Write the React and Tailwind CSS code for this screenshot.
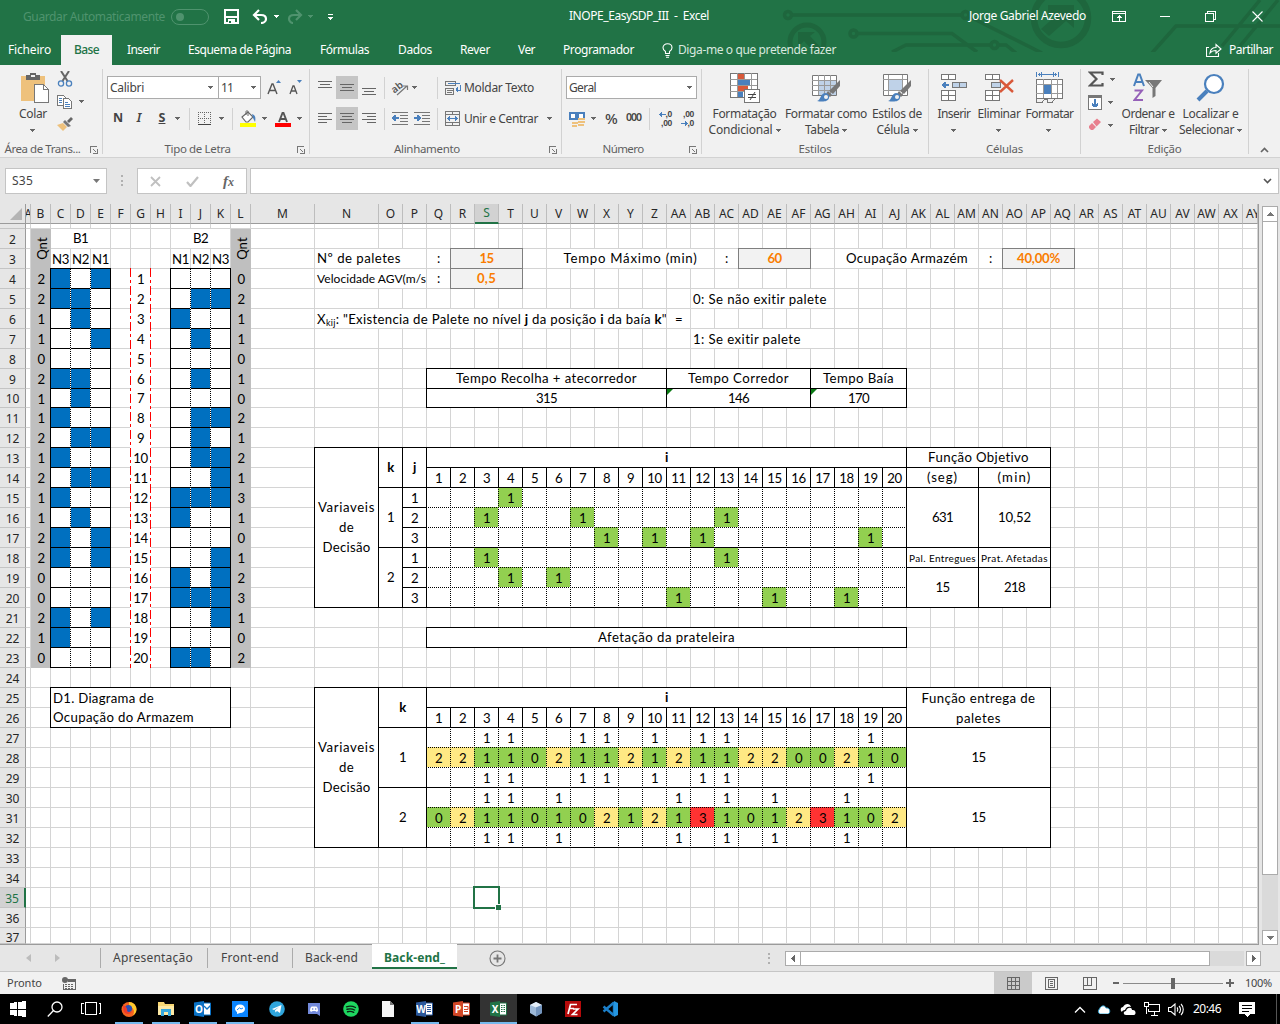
import { useLayoutEffect, useRef } from "react";

/* Text whose tracking is tuned so that it fills an exact width. */
function T({ w, className = "", children }) {
  const ref = useRef(null);
  useLayoutEffect(() => {
    const el = ref.current;
    if (!el || !w) return;
    el.style.letterSpacing = "0px";
    const box = el.getBoundingClientRect();
    const natural = Math.abs(box.width - el.offsetWidth) > 1 ? el.offsetWidth : box.width;
    const n = Math.max(1, el.textContent.length);
    el.style.letterSpacing = `${(w - natural) / n}px`;
  }, [w]);
  return (
    <span ref={ref} className={`inline-block shrink-0 whitespace-pre ${className}`}>
      {children}
    </span>
  );
}

function Caret({ className = "text-[#666]" }) {
  return (
    <svg width="5" height="3" viewBox="0 0 5 3" className={`shrink-0 ${className}`} shapeRendering="crispEdges">
      <path d="M0 0h5v1H0zM1 1h3v1H1zM2 2h1v1H2z" fill="currentColor" />
    </svg>
  );
}

function S({ w = 16, h = 16, children, crisp = true, className = "" }) {
  return (
    <svg
      width={w}
      height={h}
      viewBox={`0 0 ${w} ${h}`}
      fill="none"
      className={`shrink-0 ${className}`}
      shapeRendering={crisp ? "crispEdges" : "auto"}
    >
      {children}
    </svg>
  );
}

const Slot = ({ className, children }) => (
  <div className={`flex shrink-0 items-center justify-center ${className}`}>{children}</div>
);

/* ---------- Title bar ---------- */

function Circuit() {
  return (
    <svg className="absolute left-0 top-0" width="1280" height="52" viewBox="0 0 1280 52" fill="none" stroke="#1e663d" strokeWidth="3.5">
      <circle cx="788" cy="15" r="3.5" />
      <path d="M792 15H962M970 17L1042 53" />
      <circle cx="965.5" cy="15" r="3.5" />
      <circle cx="807" cy="42" r="17" strokeWidth="5" />
      <path d="M798 32h17l-5 4 10 11-6 5-10-11-6 6z" fill="#1e663d" stroke="none" />
      <circle cx="853.5" cy="33.5" r="3.5" />
      <path d="M857 33.500H952L977 52M892 52L906 45H990M998 45h8l10 8" />
      <circle cx="994.500" cy="45" r="3.5" />
      <circle cx="1061" cy="18" r="27" strokeWidth="6.500" />
      <path d="M1048 5h26v23l-8-7-17 15-8-7 18-16h-11z" fill="#1e663d" stroke="none" />
      <path d="M1152 53L1176 26H1280M1222 46L1260 0M1240 46L1278 0" />
    </svg>
  );
}

function TitleBar() {
  return (
    <div className="relative z-10 flex h-[35px] text-[12px] text-white">
      <div className="flex h-[33px] items-center">
        <T w={142} className="ml-[23px] pt-[1px] text-[#4f936e]">Guardar Automaticamente</T>
        <div className="ml-[6px] flex h-[16px] w-[38px] items-center rounded-full border border-[#4f936e] pl-[4px]">
          <div className="size-[8px] rounded-full bg-[#4f936e]" />
        </div>
        <S w={15} h={15} className="ml-[15px]">
          <path d="M1 1h13v13H1z" stroke="white" strokeWidth="2" />
          <path d="M2 7h11v2H2zM4 10h7v4H4z" fill="white" />
          <path d="M5 12h2v2H5z" fill="#217346" />
        </S>
        <S w={17} h={15} crisp={false} className="ml-[13px]">
          <path d="M7 1L2 6l5 5M2 6h7c4 0 5 2 5 4s-2 4-5 4" stroke="white" strokeWidth="2.200" />
        </S>
        <span className="ml-[5px]"><Caret className="text-white" /></span>
        <S w={17} h={15} crisp={false} className="ml-[8px]">
          <path d="M9 1l5 5-5 5M14 6H7C3 6 2 8 2 10s2 4 4 4" stroke="#4f936e" strokeWidth="2.200" />
        </S>
        <span className="ml-[4px]"><Caret className="text-[#4f936e]" /></span>
        <S w={5} h={6} className="ml-[15px]">
          <path d="M0 0h5v1H0zM0 3h5v1H0zM1 4h3v1H1zM2 5h1v1H2z" fill="white" />
        </S>
      </div>
      <div className="flex h-[32px] items-center">
        <T w={140} className="ml-[236px]">INOPE_EasySDP_III  -  Excel</T>
        <T w={117} className="ml-[260px]">Jorge Gabriel Azevedo</T>
        <S w={14} h={11} className="ml-[26px]">
          <path d="M.5.5h13v10H.5zM0 2.500h14" stroke="white" />
          <path d="M7 4h1v6H7zM6 5h3v1H6zM5 6h5v1H5z" fill="white" />
        </S>
        <div className="ml-[34px] h-px w-[10px] bg-white" />
        <S w={11} h={11} className="ml-[35px]">
          <path d="M.5 2.500h8v8h-8zM2.500 2V.5h8v8H9" stroke="white" />
        </S>
        <S w={11} h={11} crisp={false} className="ml-[36px]">
          <path d="M.5.5l10 10M10.500.5l-10 10" stroke="white" strokeWidth="1.100" />
        </S>
      </div>
    </div>
  );
}

function TabRow() {
  return (
    <div className="relative z-10 flex h-[30px] items-center text-[12px] text-white">
      <T w={43} className="ml-[8px]">Ficheiro</T>
      <div className="ml-[10px] flex h-full w-[51px] items-center justify-center bg-[#f1f1f1] font-medium text-[#217346]">
        <T w={25}>Base</T>
      </div>
      <T w={33} className="ml-[15px]">Inserir</T>
      <T w={103} className="ml-[28px]">Esquema de Página</T>
      <T w={49} className="ml-[29px]">Fórmulas</T>
      <T w={34} className="ml-[29px]">Dados</T>
      <T w={30} className="ml-[28px]">Rever</T>
      <T w={17} className="ml-[28px]">Ver</T>
      <T w={71} className="ml-[28px]">Programador</T>
      <S w={11} h={15} crisp={false} className="ml-[28px]">
        <path d="M3.500 10.500v-2C2 7.500 1 6.500 1 4.800 1 2.300 3 .8 5.500.8S10 2.300 10 4.800c0 1.700-1 2.700-2.500 3.700v2zM3.500 12.500h4M4 14.300h3" stroke="white" strokeWidth="1.100" />
      </S>
      <T w={158} className="ml-[5px] text-[#d8e8df]">Diga-me o que pretende fazer</T>
      <S w={16} h={14} crisp={false} className="ml-[370px]">
        <path d="M3 4.500H.5v9h12V10M4 10c.5-4 3-5.500 6-5.500V1.500L15 6l-5 4.200V7.500c-2.500 0-4.500.5-6 2.500z" stroke="white" strokeWidth="1.100" />
      </S>
      <T w={44} className="ml-[7px]">Partilhar</T>
    </div>
  );
}

/* ---------- Ribbon ---------- */

const Launcher = () => (
  <S w={8} h={8}>
    <path d="M.5 7V.5H7" stroke="#777" />
    <path d="M3 3l3 3M7.500 3v4.500H3" stroke="#777" />
  </S>
);

function Group({ className, label, lw, launcher, children }) {
  return (
    <div className={`flex h-[92px] shrink-0 flex-col ${className}`}>
      <div className="flex h-[76px]">{children}</div>
      <div className={`relative flex h-[16px] items-center justify-center text-[11.500px] text-[#5f5f5f] ${launcher ? "pr-[17px]" : ""}`}>
        <T w={lw}>{label}</T>
        {launcher && <div className="absolute right-[4px] top-[5px]"><Launcher /></div>}
      </div>
    </div>
  );
}

const Divider = () => <div className="mt-[4px] h-[85px] w-px shrink-0 bg-[#d2d2d2]" />;
const Sep = ({ className = "" }) => <div className={`h-[22px] w-px shrink-0 bg-[#d2d2d2] ${className}`} />;

function Lines({ kind }) {
  const d = {
    top: "M0 1.500h14M2 4.500h10M0 7.500h14",
    mid: "M0 4.500h14M2 7.500h10M0 10.500h14",
    bot: "M0 8.500h14M2 11.500h10M0 14.500h14",
    left: "M0 2.500h14M0 5.500h9M0 8.500h14M0 11.500h9",
    center: "M0 2.500h14M2 5.500h10M0 8.500h14M2 11.500h10",
    right: "M0 2.500h14M5 5.500h9M0 8.500h14M5 11.500h9",
  }[kind];
  return <S w={14} h={15}><path d={d} stroke="#666" /></S>;
}

function Big({ className, icon, a, aw, b, bw, caretOnly }) {
  return (
    <div className={`flex shrink-0 flex-col items-center text-[12px] leading-[16px] text-[#444] ${className}`}>
      <div className="mt-[6px] flex h-[34px] items-center justify-center">{icon}</div>
      <div className="mt-[1px] flex h-[16px] items-center"><T w={aw}>{a}</T></div>
      <div className="flex h-[16px] items-center gap-[3px]">
        {!caretOnly && <T w={bw}>{b}</T>}
        <span className={caretOnly ? "-translate-x-px" : ""}><Caret /></span>
      </div>
    </div>
  );
}

const brush = (
  <g>
    <path d="M30 7v6l-7 8-4-3z" fill="#777" />
    <path d="M18 18l4 4-2 2-4-3z" fill="#777" />
    <path d="M15 20c3 0 5 3 4 5-1 4-7 4-12 3 4-1 3-7 8-8z" fill="#4a80bd" />
    <circle cx="16" cy="24" r="2" fill="#f1f1f1" />
  </g>
);

const IcPaste = (
  <S w={30} h={32} className="translate-x-[2px]">
    <path d="M1 4h24v25H1z" fill="#eec17c" />
    <path d="M6 3h4V1h6v2h4v5H6z" fill="#666" />
    <path d="M11 3h4v2h-4z" fill="#f1f1f1" />
    <path d="M14.500 12.500h9l5 5v13h-14z" fill="white" stroke="#777" />
    <path d="M23.500 12.500v5h5" stroke="#777" />
  </S>
);
const IcCond = (
  <S w={30} h={32}>
    <path d="M.5 1.500h27v24H.5z" fill="white" stroke="#777" />
    <path d="M7.500 1v24M14.500 1v24M21.500 1v24M0 7.500h27M0 13.500h27M0 19.500h27" stroke="#999" />
    <path d="M8 2h6v5H8zM8 14h10v5H8z" fill="#d9593a" />
    <path d="M8 8h12v5H8zM8 20h5v5H8z" fill="#4a80bd" />
    <path d="M14.500 17.500h15v13h-15z" fill="white" stroke="#777" />
    <path d="M18 22.500h8M18 25.500h8M20 28l5-8" stroke="#444" shapeRendering="auto" />
  </S>
);
const IcTable = (
  <S w={32} h={31} crisp={false}>
    <path d="M2.500 2.500h24v20h-24z" fill="white" stroke="#777" />
    <path d="M9 8h17v14H9z" fill="#bfd2e8" />
    <path d="M8.500 2v20M14.500 2v20M20.500 2v20M2 7.500h24M2 12.500h24M2 17.500h24" stroke="#999" />
    {brush}
  </S>
);
const IcStyle = (
  <S w={32} h={31} crisp={false}>
    <path d="M2.500 1.500h24v21h-24z" fill="white" stroke="#777" />
    <path d="M7.500 2v20M21.500 2v20M2 6.500h24M2 17.500h24" stroke="#999" />
    <path d="M8 7h13v10H8z" fill="#bfd2e8" />
    {brush}
  </S>
);
const IcInsert = (
  <S w={28} h={30}>
    <path d="M1.500 1.500h14v5h-14zM8.500 1v6M1.500 17.500h14v10h-14zM8.500 17v10M1 22.500h14" fill="white" stroke="#777" />
    <path d="M12.500 9.500h14v5h-14z" fill="#bfd2e8" stroke="#777" />
    <path d="M19.500 9v6" stroke="#777" />
    <path d="M2 11h7v2H2zM3 10h3v4H3zM4 9h2v6H4z" fill="#4a80bd" />
  </S>
);
const IcDelete = (
  <S w={31} h={30}>
    <path d="M1.500 1.500h14v5h-14zM8.500 1v6M1.500 17.500h14v10h-14zM8.500 17v10M1 22.500h14" fill="white" stroke="#777" />
    <path d="M7.500 9.500h9v5h-9z" fill="#bfd2e8" stroke="#777" />
    <path d="M16 7l13 12M29 7L16 19" stroke="#d9593a" strokeWidth="2.400" shapeRendering="auto" />
  </S>
);
const IcFormat = (
  <S w={28} h={32}>
    <path d="M.5 0v5M22.500 0v5M2 2.500h19M5.500 0v5M17.500 0v5M3.500 1v3M19.500 1v3" stroke="#4a80bd" />
    <path d="M.5 7.500h26v19H.5z" fill="white" stroke="#777" />
    <path d="M7.500 7v19M15.500 7v19M21.500 7v19M0 12.500h26M0 21.500h26" stroke="#999" />
    <path d="M8 13h7v9H8z" fill="#4a80bd" />
    <path d="M.5 26v4h6l2-3h3v3h5l2-3" stroke="#777" />
  </S>
);
const IcSort = (
  <S w={30} h={30} crisp={false}>
    <path d="M1 13L5.200 1.500h1.600L11 13M2.700 9h6.600" stroke="#4a80bd" strokeWidth="2" />
    <path d="M1.500 17.500H9L1.500 27H10" stroke="#9560b8" strokeWidth="2" />
    <path d="M12 7h17l-6.500 8v8l-3 2V15z" fill="#777" />
    <path d="M16 9l4 5" stroke="#f1f1f1" />
  </S>
);
const IcFind = (
  <S w={30} h={30} crisp={false}>
    <path d="M2 27l9-9" stroke="#4a80bd" strokeWidth="4" />
    <circle cx="18" cy="11" r="9" fill="white" stroke="#4a80bd" strokeWidth="2.200" />
  </S>
);

const Digits = ({ children }) => (
  <span className="font-['Liberation_Sans'] text-[8.500px] font-bold leading-[9px] tracking-[-0.3px]">{children}</span>
);

function Ribbon() {
  return (
    <div className="flex h-[93px] border-b border-[#d2d2d2] bg-[#f1f1f1]">
      <Group className="w-[102px]" label="Área de Trans..." lw={76} launcher>
        <div className="w-[4px]" />
        <Big className="w-[58px]" icon={IcPaste} a="Colar" aw={28} caretOnly />
        <div className="flex flex-col pt-[4px]">
          <Slot className="h-[20px] w-[16px] -translate-x-[5px]">
            <S w={16} h={16} crisp={false}>
              <path d="M4 0l6.500 10M12 0L5.500 10" stroke="#666" strokeWidth="2" />
              <circle cx="4" cy="12.500" r="2.600" stroke="#4a80bd" strokeWidth="1.300" />
              <circle cx="12" cy="12.500" r="2.600" stroke="#4a80bd" strokeWidth="1.300" />
            </S>
          </Slot>
          <div className="-ml-[5px] flex h-[25px] items-center">
            <S>
              <path d="M.5 1.500h6l3 3v7h-9z" fill="white" stroke="#777" />
              <path d="M6.500 4.500h5l3 3v7h-8z" fill="white" stroke="#777" />
              <path d="M2 4.500h3M2 6.500h3M2 8.500h3M8 8.500h3M8 10.500h5M8 12.500h5" stroke="#4a80bd" />
            </S>
            <span className="ml-[6px]"><Caret /></span>
          </div>
          <Slot className="h-[20px] w-[16px] -translate-x-[5px]">
            <S crisp={false}>
              <path d="M0 9l6-2 4 4-4 4z" fill="#eec17c" />
              <path d="M6 6l2-2 6 6-3 1z" fill="#777" />
              <path d="M10 5l4-4 2 2-4 4z" fill="#666" />
            </S>
          </Slot>
        </div>
      </Group>
      <Divider />
      <Group className="w-[206px]" label="Tipo de Letra" lw={66} launcher>
        <div className="flex flex-col pl-[4px] pt-[11px] text-[12px] text-[#444]">
          <div className="flex h-[23px] items-center">
            <div className="flex h-full w-[112px] items-center justify-between border border-[#ababab] bg-white pl-[2px] pr-[5px]"><T w={34}>Calibri</T><Caret /></div>
            <div className="-ml-px flex h-full w-[43px] items-center justify-between border border-[#ababab] bg-white pl-[2px] pr-[4px]"><T w={12}>11</T><Caret /></div>
            <S w={14} h={16} className="ml-[6px]" crisp={false}>
              <path d="M1 14L5 4h1l4 10M2.500 10.500h6" stroke="#555" strokeWidth="1.400" /><path d="M9 3h5l-2.500-3z" fill="#4a80bd" />
            </S>
            <S w={14} h={16} className="ml-[8px]" crisp={false}>
              <path d="M1 14L4 6h1l3 8M2.200 11h4.600" stroke="#555" strokeWidth="1.300" /><path d="M8 0h5l-2.500 3z" fill="#4a80bd" />
            </S>
          </div>
          <div className="mt-[8px] flex h-[23px] items-center">
            <Slot className="w-[22px] text-[12.500px] font-bold">N</Slot>
            <Slot className="w-[20px] text-[12.500px] font-semibold italic">I</Slot>
            <Slot className="w-[26px] text-[12.500px] font-bold underline">S</Slot>
            <Slot className="w-[5px]"><Caret /></Slot>
            <Sep className="ml-[9px]" />
            <S w={14} h={14} className="ml-[8px]">
              <path d="M0 .5h14M.5 0v12M6.500 0v12M12.500 0v12M0 6.500h14" stroke="#666" strokeDasharray="1 1" />
              <path d="M0 12.500h13" stroke="#444" />
            </S>
            <span className="ml-[7px]"><Caret /></span>
            <Sep className="ml-[8px]" />
            <S w={16} h={17} className="ml-[7px]" crisp={false}>
              <path d="M2 7l6-5 5 5-5 5H6z" fill="white" stroke="#666" strokeWidth="1.100" />
              <path d="M6 5V1.500c0-1 2-1 2 0V6" stroke="#666" />
              <path d="M12 4c3 1 4 3 3 8l-2-4z" fill="#4a80bd" />
              <path d="M0 13h16v4H0z" fill="#ff0" />
            </S>
            <span className="ml-[6px]"><Caret /></span>
            <S w={16} h={17} className="ml-[8px]" crisp={false}>
              <path d="M4 12L7.500 3h1L12 12M5.500 9h5" stroke="#555" strokeWidth="1.900" /><path d="M0 13h16v4H0z" fill="red" />
            </S>
            <span className="ml-[6px]"><Caret /></span>
          </div>
        </div>
      </Group>
      <Divider />
      <Group className="w-[251px]" label="Alinhamento" lw={66} launcher>
        <div className="flex flex-col pl-[4px] pt-[11px] text-[12px] text-[#444]">
          <div className="flex h-[23px] items-center">
            <Slot className="w-[22px]"><Lines kind="top" /></Slot>
            <Slot className="h-full w-[22px] bg-[#c5c5c5]"><Lines kind="mid" /></Slot>
            <Slot className="w-[22px]"><Lines kind="bot" /></Slot>
            <Sep className="ml-[4px]" />
            <S w={17} h={16} crisp={false} className="ml-[7px] overflow-visible">
              <text x="0" y="11" transform="rotate(-38 5 9)" fontSize="10" fontWeight="600" fill="#555">ab</text>
              <path d="M5 15l10-9M11 6h4.500v4" stroke="#777" strokeWidth="1.200" />
            </S>
            <span className="ml-[3px]"><Caret /></span>
            <Sep className="ml-[20px]" />
            <S w={16} h={16} className="ml-[7px]">
              <path d="M.5 1.500h10v4H.5zM.5 8.500h8v6H.5zM2 10.500h6M2 12.500h5" stroke="#777" />
              <path d="M3 3.500h12M15.500 5v5H11M12.500 7v5M11.500 8v3" stroke="#4a80bd" />
            </S>
            <T w={70} className="ml-[3px]">Moldar Texto</T>
          </div>
          <div className="mt-[8px] flex h-[23px] items-center">
            <Slot className="w-[22px]"><Lines kind="left" /></Slot>
            <Slot className="h-full w-[22px] bg-[#c5c5c5]"><Lines kind="center" /></Slot>
            <Slot className="w-[22px]"><Lines kind="right" /></Slot>
            <Sep className="ml-[4px]" />
            <S w={16} h={13} className="ml-[7px]">
              <path d="M0 .5h16M8 3.500h8M8 6.500h8M8 9.500h8M0 12.500h16" stroke="#777" />
              <path d="M0 5.500h7M0 6.500h7M1.500 4v4M2.500 3v6M3.500 3v6" stroke="#4a80bd" />
            </S>
            <S w={16} h={13} className="ml-[6px]">
              <path d="M0 .5h16M8 3.500h8M8 6.500h8M8 9.500h8M0 12.500h16" stroke="#777" />
              <path d="M0 5.500h7M0 6.500h7M5.500 4v4M4.500 3v6M3.500 3v6" stroke="#4a80bd" />
            </S>
            <Sep className="ml-[7px]" />
            <S w={15} h={15} className="ml-[7px]">
              <path d="M.5.5h14v14H.5zM7.500 0v3M7.500 12v3M0 3.500h14M0 11.500h14" stroke="#777" />
              <path d="M2 7.500h11M3.500 6v3M4.500 5v5M11.500 6v3M10.500 5v5" stroke="#4a80bd" />
            </S>
            <T w={74} className="ml-[4px]">Unir e Centrar</T>
            <span className="ml-[9px]"><Caret /></span>
          </div>
        </div>
      </Group>
      <Divider />
      <Group className="w-[139px]" label="Número" lw={41} launcher>
        <div className="flex flex-col pl-[4px] pt-[11px] text-[12px] text-[#444]">
          <div className="flex h-[23px] w-[131px] items-center justify-between border border-[#ababab] bg-white pl-[2px] pr-[4px]"><T w={27}>Geral</T><Caret /></div>
          <div className="mt-[8px] flex h-[23px] items-center">
            <S w={16} h={16} className="ml-[3px]">
              <path d="M0 1h16v8H0z" fill="#4a80bd" /><path d="M2 3h12v4H2z" fill="white" /><path d="M6 3h4v4H6z" fill="#4a80bd" />
              <path d="M9 7h7v2H9zM9 10h7v2H9zM9 13h6v2H9zM3 11h6v2H3zM3 14h5v2H3z" fill="#eec17c" />
            </S>
            <span className="ml-[6px]"><Caret /></span>
            <T w={13} className="ml-[9px] text-[15px] font-medium">%</T>
            <T w={15} className="ml-[8px] pb-[2px] text-[10.500px] font-semibold">000</T>
            <Sep className="ml-[8px]" />
            <div className="ml-[7px] flex w-[15px] flex-col items-end leading-[9px]">
              <div className="flex h-[9px] items-center"><S w={7} h={5}><path d="M0 2h7v1H0zM1 1h2v3H1zM2 0h1v5H2z" fill="#4a80bd" /></S><Digits>,0</Digits></div>
              <div className="flex h-[9px] items-center"><Digits>,00</Digits></div>
            </div>
            <div className="ml-[7px] flex w-[15px] flex-col items-end leading-[9px]">
              <div className="flex h-[9px] items-center"><Digits>,00</Digits></div>
              <div className="flex h-[9px] items-center"><S w={7} h={5}><path d="M0 2h7v1H0zM4 1h2v3H4zM4 0h1v5H4z" fill="#4a80bd" /></S><Digits>,0</Digits></div>
            </div>
          </div>
        </div>
      </Group>
      <Divider />
      <Group className="w-[226px]" label="Estilos" lw={33}>
        <div className="w-[1px]" />
        <Big className="w-[83px]" icon={IcCond} a="Formatação" aw={64} b="Condicional" bw={64} />
        <Big className="w-[80px]" icon={IcTable} a="Formatar como" aw={82} b="Tabela" bw={34} />
        <Big className="w-[62px]" icon={IcStyle} a="Estilos de" aw={50} b="Célula" bw={33} />
      </Group>
      <Divider />
      <Group className="w-[151px]" label="Células" lw={37}>
        <div className="w-[2px]" />
        <Big className="w-[46px]" icon={IcInsert} a="Inserir" aw={33} caretOnly />
        <Big className="w-[44px]" icon={IcDelete} a="Eliminar" aw={43} caretOnly />
        <Big className="w-[57px]" icon={IcFormat} a="Formatar" aw={48} caretOnly />
      </Group>
      <Divider />
      <Group className="w-[167px]" label="Edição" lw={34}>
        <div className="flex w-[36px] flex-col pl-[7px] pt-[3px]">
          <div className="flex h-[22px] items-center">
            <S w={16} h={16} crisp={false}><path d="M14.500 4V1.500H2l6.500 6.500L2 14.500h12.500V12" stroke="#555" strokeWidth="2.200" /></S>
            <span className="ml-[6px]"><Caret /></span>
          </div>
          <div className="flex h-[24px] items-center">
            <S w={14} h={16}><path d="M.5 1.500h13v14H.5z" fill="white" stroke="#777" /><path d="M1 2h12v2H1z" fill="#777" /><path d="M6 5h2v8H6zM4 9h1v3H4zM9 9h1v3H9zM5 10h4v3H5z" fill="#4a80bd" /></S>
            <span className="ml-[6px]"><Caret /></span>
          </div>
          <div className="flex h-[22px] items-center">
            <S w={14} h={14} crisp={false}><path d="M1 8l3-3 4 4-3 3H3L1 10zM5 4l4-3.500L13 4 8.500 8.500z" fill="#e8808e" /></S>
            <span className="ml-[6px]"><Caret /></span>
          </div>
        </div>
        <Big className="w-[62px]" icon={IcSort} a="Ordenar e" aw={53} b="Filtrar" bw={30} />
        <Big className="w-[63px]" icon={IcFind} a="Localizar e" aw={56} b="Selecionar" bw={55} />
      </Group>
      <Divider />
      <div className="flex flex-1 items-end justify-center pb-[4px]">
        <S w={9} h={6} crisp={false}><path d="M1 5l3.500-3.500L8 5" stroke="#666" strokeWidth="1.700" /></S>
      </div>
    </div>
  );
}

/* ---------- Formula bar ---------- */

function FormulaBar() {
  return (
    <div className="flex h-[46px] items-start bg-[#e6e6e6] pt-[10px] text-[12px] text-[#444]">
      <div className="ml-[5px] flex h-[26px] w-[102px] items-center justify-between border border-[#c4c4c4] bg-white pl-[6px] pr-[6px]">
        <T w={21}>S35</T>
        <S w={7} h={4} crisp={false}><path d="M0 0h7L3.500 4z" fill="#777" /></S>
      </div>
      <S w={2} h={12} className="ml-[14px] mt-[7px]"><path d="M0 0h2v2H0zM0 5h2v2H0zM0 9h2v2H0z" fill="#b0b0b0" /></S>
      <div className="ml-[14px] flex h-[26px] w-[110px] items-center border border-[#c4c4c4] bg-white">
        <S w={11} h={11} crisp={false} className="ml-[12px]"><path d="M1 1l9 9M10 1l-9 9" stroke="#c0c0c0" strokeWidth="1.800" /></S>
        <S w={13} h={11} crisp={false} className="ml-[25px]"><path d="M1 6l3.500 4L12 1" stroke="#c0c0c0" strokeWidth="2.200" /></S>
        <span className="ml-[24px] font-['Liberation_Serif'] text-[15px] font-bold italic leading-none text-[#666]">f<span className="text-[12px]">x</span></span>
      </div>
      <div className="ml-[3px] flex h-[26px] flex-1 items-center justify-end border border-[#c4c4c4] bg-white pr-[6px]">
        <S w={9} h={6} crisp={false}><path d="M1 1l3.500 3.500L8 1" stroke="#555" strokeWidth="1.600" /></S>
      </div>
      <div className="w-[1px]" />
    </div>
  );
}

/* ---------- Worksheet ---------- */

const letters = "ABCDEFGHIJKLMNOPQRSTUVWXYZ";
const colName = (i) => (i < 26 ? letters[i] : "A" + letters[i - 26]);
const COLS = Array.from({ length: 51 }, (_, i) => colName(i));
const colIndex = (name) => COLS.indexOf(name) + 2;
const ROWS = Array.from({ length: 37 }, (_, i) => i + 1);

const place = (from, to = from) => {
  const [, c1, r1] = from.match(/([A-Z]+)(\d+)/);
  const [, c2, r2] = to.match(/([A-Z]+)(\d+)/);
  return {
    gridColumn: `${colIndex(c1)} / ${colIndex(c2) + 1}`,
    gridRow: `${Number(r1) + 1} / ${Number(r2) + 2}`,
  };
};

/* A range that keeps the lines of its right and bottom neighbours. */
function Cell({ at, to, className = "", children }) {
  return (
    <div style={place(at, to)} className={`flex min-w-0 items-center overflow-hidden whitespace-pre border-b border-r border-[#d4d4d4] bg-white ${className}`}>
      {children}
    </div>
  );
}

/* A range outlined on its four sides, over the surrounding lines. */
function Box({ at, to, className = "", children }) {
  return (
    <div style={place(at, to)} className={`relative -ml-px -mt-px flex min-w-0 items-center justify-center whitespace-pre border ${className}`}>
      {children}
    </div>
  );
}

const shelves1 = ["CE", "CD", "D", "E", "", "CD", "D", "C", "DE", "C", "DE", "C", "D", "CE", "CE", "", "", "CE", "C", ""];
const shelves2 = ["", "JK", "I", "J", "", "J", "", "JK", "J", "JK", "K", "IJK", "I", "", "K", "IK", "IJK", "K", "", "IJ"];
const qty1 = [2, 2, 1, 1, 0, 2, 1, 1, 2, 1, 2, 1, 1, 2, 2, 0, 0, 2, 1, 0];
const qty2 = [0, 2, 1, 1, 0, 1, 0, 2, 1, 2, 1, 3, 1, 0, 1, 2, 3, 1, 0, 2];
const iCols = COLS.slice(16, 36);
const decisions = { 15: [4], 16: [3, 7, 13], 17: [8, 10, 12, 19], 18: [3, 13], 19: [4, 6], 20: [11, 15, 18] };
const near1 = [3, 4, 7, 8, 10, 12, 13, 19];
const near2 = [3, 4, 6, 11, 13, 15, 18];
const heat = (n) => (n === 3 ? "bg-[#ff3232]" : n === 2 ? "bg-[#ffe984]" : "bg-[#92d050]");

function BaseGrid() {
  return (
    <>
      <div className="flex items-end justify-end border-b border-r border-[#9b9b9b] bg-[#e6e6e6] p-[3px]" style={{ gridColumn: 1, gridRow: 1 }}>
        <S w={12} h={12} crisp={false}><path d="M12 0v12H0z" fill="#b4b4b4" /></S>
      </div>
      {COLS.map((c, i) => (
        <div
          key={c}
          style={{ gridColumn: i + 2, gridRow: 1 }}
          className={`flex items-center overflow-hidden border-r border-r-[#bdbdbd] font-['Noto_Sans'] text-[12px] tracking-normal ${c === "AY" ? "justify-start pl-[3px]" : "justify-center"} ${c === "S" ? "border-b-2 border-b-[#217346] bg-[#d2d2d2] text-[#217346]" : "border-b border-b-[#9b9b9b] bg-[#e6e6e6] text-[#262626]"}`}
        >
          {c}
        </div>
      ))}
      {ROWS.map((r) => (
        <div
          key={r}
          style={{ gridColumn: 1, gridRow: r + 1 }}
          className={`flex items-center justify-center overflow-hidden border-b border-b-[#c4c4c4] font-['Noto_Sans'] text-[12px] tracking-normal ${r === 35 ? "border-r-2 border-r-[#217346] bg-[#d2d2d2] text-[#217346]" : "border-r border-r-[#9b9b9b] bg-[#e6e6e6] text-[#262626]"}`}
        >
          <span className={r === 37 ? "pt-[4px]" : "pt-[2px]"}>{r > 1 ? r : ""}</span>
        </div>
      ))}
      {ROWS.map((r) => COLS.map((c, i) => (
        <div key={c + r} style={{ gridColumn: i + 2, gridRow: r + 1 }} className="border-b border-r border-[#d4d4d4]" />
      )))}
    </>
  );
}

function Warehouse() {
  return (
    <>
      {[["B", qty1], ["L", qty2]].map(([c, q]) => (
        <div key={c} style={place(`${c}2`, `${c}23`)} className="grid grid-cols-[20px] grid-rows-subgrid bg-[#bfbfbf]">
          <div className="row-span-2 flex items-center justify-center">
            <div className="shrink-0 -rotate-90 pt-[2px]"><T w={22}>Qnt</T></div>
          </div>
          {q.map((n, i) => <div key={i} className="flex items-center justify-center pt-[2px]">{n}</div>)}
        </div>
      ))}
      <Cell at="C2" to="E2" className="justify-center"><T w={15}>B1</T></Cell>
      <Cell at="I2" to="K2" className="justify-center"><T w={15}>B2</T></Cell>
      {[["C", "N3"], ["D", "N2"], ["E", "N1"], ["I", "N1"], ["J", "N2"], ["K", "N3"]].map(([c, t]) => (
        <Cell key={c} at={`${c}3`} className="justify-center pt-[2px]"><T w={17}>{t}</T></Cell>
      ))}
      {shelves1.map((s, i) => ["C", "D", "E"].map((c) => (
        <Box key={c + i} at={`${c}${i + 4}`} className={`border-x-0 border-black ${s.includes(c) ? "bg-[#0070c0]" : "bg-white"}`} />
      )))}
      {shelves2.map((s, i) => ["I", "J", "K"].map((c) => (
        <Box key={c + i} at={`${c}${i + 4}`} className={`border-x-0 border-black ${s.includes(c) ? "bg-[#0070c0]" : "bg-white"}`} />
      )))}
      <Box at="C4" to="C23" className="border-y-0 border-l-black border-r-white" />
      <Box at="E4" to="E23" className="border-y-0 border-l-white border-r-black" />
      <Box at="I4" to="I23" className="border-y-0 border-l-black border-r-white" />
      <Box at="K4" to="K23" className="border-y-0 border-l-white border-r-black" />
      <Box at="D4" to="D23" className="border-x border-y-0 border-dotted border-black" />
      <Box at="J4" to="J23" className="border-x border-y-0 border-dotted border-black" />
      {ROWS.slice(0, 20).map((n) => (
        <Cell key={n} at={`G${n + 3}`} className="justify-center border-transparent pt-[2px]">{n}</Cell>
      ))}
      <Box at="G4" to="G23" className="!justify-between border-none">
        {["l", "r"].map((k) => (
          <S key={k} w={1} h={400}><path d="M.5 0v400" stroke="#fff" /><path d="M.5 0v400" stroke="red" strokeDasharray="9 3 3 3" /></S>
        ))}
      </Box>
      <Box at="C25" to="K26" className="flex-col !items-start border-black bg-white pl-[2px] leading-[19px]">
        <T w={101}>D1. Diagrama de</T>
        <T w={141}>Ocupação do Armazem</T>
      </Box>
    </>
  );
}

function Parameters() {
  const input = "border-[#7f7f7f] bg-[#f2f2f2] font-bold text-[#fa7d00]";
  return (
    <>
      <Cell at="N3" to="P3" className="pl-[2px]"><T w={84}>Nº de paletes</T></Cell>
      <Cell at="N4" to="P4" className="pl-[2px] text-[12px]"><T w={109}>Velocidade AGV(m/s</T></Cell>
      <Cell at="Q3" className="justify-center pt-[1px]">:</Cell>
      <Cell at="Q4" className="justify-center pt-[1px]">:</Cell>
      <Box at="R3" to="T3" className={input}><T w={14}>15</T></Box>
      <Box at="R4" to="T4" className={input}><T w={19}>0,5</T></Box>
      <Cell at="V3" to="AB3" className="justify-center"><T w={134}>Tempo Máximo (min)</T></Cell>
      <Cell at="AC3" className="justify-center pt-[1px]">:</Cell>
      <Box at="AD3" to="AF3" className={input}><T w={14}>60</T></Box>
      <Cell at="AH3" to="AM3" className="justify-center pl-[1px]"><T w={122}>Ocupação Armazém</T></Cell>
      <Cell at="AN3" className="justify-center pt-[1px]">:</Cell>
      <Box at="AO3" to="AQ3" className={input}><T w={43}>40,00%</T></Box>
      <Cell at="AB5" to="AG5" className="pl-[2px] pt-[2px]"><T w={134}>0: Se não exitir palete</T></Cell>
      <Cell at="AB7" to="AG7" className="pl-[2px] pt-[2px]"><T w={108}>1: Se exitir palete</T></Cell>
      <Cell at="N6" to="Z6" className="pl-[2px] pt-[2px]">
        <T w={350}>X<sub className="text-[9px]">kij</sub>: "Existencia de Palete no nível <b>j</b> da posição <b>i</b> da baía <b>k</b>"</T>
      </Cell>
      <Cell at="AA6" className="justify-center pt-[2px]">=</Cell>
    </>
  );
}

function Times() {
  const items = [
    ["Q", "Z", "Tempo Recolha + atecorredor", 181, "315"],
    ["AA", "AF", "Tempo Corredor", 101, "146"],
    ["AG", "AJ", "Tempo Baía", 71, "170"],
  ];
  return items.map(([a, b, label, w, n], i) => [
    <Box key={a} at={`${a}9`} to={`${b}9`} className="border-black bg-white"><T w={w}>{label}</T></Box>,
    <Box key={a + "v"} at={`${a}10`} to={`${b}10`} className="border-black bg-white pt-[2px]">
      <T w={21}>{n}</T>
      {i > 0 && <S w={6} h={6} crisp={false} className="absolute left-0 top-0"><path d="M0 0h6L0 6z" fill="#0b7a14" /></S>}
    </Box>,
  ]);
}

function SideTitle({ at, to }) {
  return (
    <Box at={at} to={to} className="flex-col border-black bg-white pb-[2px] leading-[20px]">
      <T w={57}>Variaveis</T><T w={15}>de</T><T w={48}>Decisão</T>
    </Box>
  );
}

function IndexHeader({ row }) {
  return (
    <>
      <Box at={`Q${row}`} to={`AJ${row}`} className="border-black bg-white font-bold">i</Box>
      {iCols.map((c, i) => (
        <Box key={c} at={`${c}${row + 1}`} className="border-black bg-white pt-[2px]">{i + 1}</Box>
      ))}
    </>
  );
}

function Decisions() {
  return (
    <>
      <SideTitle at="N13" to="N20" />
      <Box at="O13" to="O14" className="border-black bg-white font-bold">k</Box>
      <Box at="P13" to="P14" className="border-black bg-white font-bold">j</Box>
      <IndexHeader row={13} />
      {Object.entries(decisions).map(([r, ones]) => iCols.map((c, i) => (
        <Box key={c + r} at={`${c}${r}`} className={`border-dotted border-black pt-[2px] ${ones.includes(i + 1) ? "bg-[#92d050]" : "bg-white"}`}>
          {ones.includes(i + 1) ? 1 : ""}
        </Box>
      )))}
      {["O15:O17:1", "O18:O20:2", "P15:P15:1", "P16:P16:2", "P17:P17:3", "P18:P18:1", "P19:P19:2", "P20:P20:3"].map((s) => {
        const [a, b, t] = s.split(":");
        return <Box key={s} at={a} to={b} className={`border-black bg-white ${a === b ? "pt-[2px]" : "pt-[1px]"}`}>{t}</Box>;
      })}
      <Box at="Q15" to="AJ17" className="border-black" />
      <Box at="Q18" to="AJ20" className="border-black" />
      <Box at="AK13" to="AP13" className="border-black bg-white"><T w={101}>Função Objetivo</T></Box>
      <Box at="AK14" to="AM14" className="border-black bg-white"><T w={31}>(seg)</T></Box>
      <Box at="AN14" to="AP14" className="border-black bg-white"><T w={34}>(min)</T></Box>
      <Box at="AK15" to="AM17" className="border-black bg-white"><T w={21}>631</T></Box>
      <Box at="AN15" to="AP17" className="border-black bg-white"><T w={33}>10,52</T></Box>
      <Box at="AK18" to="AM18" className="border-black bg-white text-[10px]"><T w={67}>Pal. Entregues</T></Box>
      <Box at="AN18" to="AP18" className="border-black bg-white text-[10px]"><T w={67}>Prat. Afetadas</T></Box>
      <Box at="AK19" to="AM20" className="border-black bg-white"><T w={14}>15</T></Box>
      <Box at="AN19" to="AP20" className="border-black bg-white"><T w={21}>218</T></Box>
      <Box at="Q22" to="AJ22" className="border-black bg-white"><T w={137}>Afetação da prateleira</T></Box>
    </>
  );
}

function Shelf({ top, near, line, label }) {
  return (
    <>
      <Box at={`O${top}`} to={`P${top + 2}`} className="border-black bg-white">{label}</Box>
      {[0, 1, 2].map((d) => iCols.map((c, i) => (
        <Box key={c + d} at={`${c}${top + d}`} className={`border-dotted border-black pt-[2px] ${d === 1 ? heat(line[i]) : "bg-white"} ${d === 0 ? "border-b-0" : ""}`}>
          {d === 1 ? line[i] : near.includes(i + 1) ? 1 : ""}
        </Box>
      )))}
      <Box at={`Q${top}`} to={`AJ${top + 2}`} className="border-black" />
      <Box at={`AK${top}`} to={`AP${top + 2}`} className="border-black bg-white"><T w={14}>15</T></Box>
    </>
  );
}

function Delivery() {
  return (
    <>
      <SideTitle at="N25" to="N32" />
      <Box at="O25" to="P26" className="border-black bg-white font-bold">k</Box>
      <IndexHeader row={25} />
      <Shelf top={27} near={near1} line={qty1} label="1" />
      <Shelf top={30} near={near2} line={qty2} label="2" />
      <Box at="AK25" to="AP26" className="flex-col border-black bg-white leading-[20px]">
        <T w={114}>Função entrega de</T><T w={45}>paletes</T>
      </Box>
      <div style={place("S35")} className="relative -mb-px -ml-[2px] -mr-px -mt-[2px] border-2 border-[#217346]">
        <div className="absolute -bottom-[3px] -right-[3px] size-[6px] border-l border-t border-white bg-[#217346]" />
      </div>
    </>
  );
}

function Sheet() {
  return (
    <div className="flex h-[741px] bg-[#e6e6e6]">
      <div className="grid h-[741px] w-[1259px] grid-cols-[26px_5px_repeat(11,20px)_64px_64px_repeat(36,24px)_15px] grid-rows-[20px_5px_repeat(8,20px)_19px_repeat(26,20px)_16px] overflow-hidden border-b border-r border-[#9b9b9b] bg-white font-['Lato'] text-[13.200px] leading-none tracking-[-0.5px] text-black">
        <BaseGrid />
        <Warehouse />
        <Parameters />
        <Times />
        <Decisions />
        <Delivery />
      </div>
      <div className="ml-[3px] flex w-[16px] flex-col pt-[2px]">
        <Slot className="h-[16px] border border-[#ababab] bg-white"><S w={7} h={4}><path d="M3 0h1v1H3zM2 1h3v1H2zM1 2h5v1H1zM0 3h7v1H0z" fill="#777" /></S></Slot>
        <div className="-mt-px h-[654px] border border-[#ababab] bg-white" />
        <div className="flex-1 bg-[#dadada]" />
        <Slot className="h-[15px] border border-[#ababab] bg-white"><S w={7} h={4}><path d="M3 3h1v1H3zM2 2h3v1H2zM1 1h5v1H1zM0 0h7v1H0z" fill="#777" /></S></Slot>
      </div>
    </div>
  );
}

/* ---------- Sheet tabs and status bar ---------- */

const TabSep = ({ className }) => <div className={`h-[20px] w-px bg-[#ababab] ${className}`} />;

function SheetTabs() {
  return (
    <div className="flex h-[27px] items-center border-b border-[#c6c6c6] bg-[#e6e6e6] text-[12px] text-[#444]">
      <S w={5} h={8} className="ml-[26px]" crisp={false}><path d="M5 0v8L0 4z" fill="#bcbcbc" /></S>
      <S w={5} h={8} className="ml-[24px]" crisp={false}><path d="M0 0v8l5-4z" fill="#bcbcbc" /></S>
      <TabSep className="ml-[40px]" />
      <T w={80} className="ml-[12px]">Apresentação</T>
      <TabSep className="ml-[14px]" />
      <T w={58} className="ml-[13px]">Front-end</T>
      <TabSep className="ml-[13px]" />
      <T w={53} className="ml-[12px]">Back-end</T>
      <div className="relative -mt-[3px] ml-[14px] flex h-[25px] w-[85px] items-center justify-center border-b-2 border-[#217346] bg-white pt-[4px] font-bold text-[#217346]">
        <T w={61}>Back-end_</T>
      </div>
      <S w={17} h={17} className="ml-[32px]" crisp={false}>
        <circle cx="8.500" cy="8.500" r="7.500" stroke="#777" strokeWidth="1.100" /><path d="M8.500 4.500v8M4.500 8.500h8" stroke="#777" strokeWidth="1.800" />
      </S>
      <S w={2} h={11} className="ml-[262px]"><path d="M0 0h2v2H0zM0 4h2v2H0zM0 9h2v2H0z" fill="#b0b0b0" /></S>
      <Slot className="ml-[15px] h-[15px] w-[16px] border border-[#ababab] bg-white"><S w={4} h={7}><path d="M3 0h1v7H3zM2 1h1v5H2zM1 2h1v3H1zM0 3h1v1H0z" fill="#666" /></S></Slot>
      <div className="-ml-px h-[15px] w-[410px] border border-[#ababab] bg-white" />
      <div className="h-[15px] w-[34px] bg-[#dadada]" />
      <Slot className="ml-[2px] h-[15px] w-[15px] border border-[#ababab] bg-white"><S w={4} h={7}><path d="M0 0h1v7H0zM1 1h1v5H1zM2 2h1v3H2zM3 3h1v1H3z" fill="#666" /></S></Slot>
    </div>
  );
}

function StatusBar() {
  return (
    <div className="flex h-[22px] items-center bg-[#f1f1f1] text-[11px] text-[#444]">
      <T w={35} className="ml-[7px]">Pronto</T>
      <S w={14} h={13} className="ml-[20px]">
        <path d="M5 2.500h8.500v10H1.500V7" stroke="#666" /><path d="M6 3h7v2H6z" fill="#666" />
        <path d="M3 7.500h9M3 9.500h9M3 11.500h9" stroke="#666" strokeDasharray="2 1" /><circle cx="3" cy="3" r="3" fill="#666" shapeRendering="auto" />
      </S>
      <Slot className="ml-[918px] h-full w-[38px] bg-[#cacaca]">
        <S w={13} h={13}><path d="M.5.5h12v12H.5zM4.500 0v12M8.500 0v12M0 4.500h12M0 8.500h12" stroke="#666" /></S>
      </Slot>
      <S w={13} h={13} className="ml-[13px]"><path d="M.5.5h12v12H.5zM3.500 2.500h6v8h-6zM5 4.500h3M5 6.500h3M5 8.500h3" stroke="#666" /></S>
      <S w={14} h={13} className="ml-[25px]"><path d="M.5.5h13v12H.5zM4.500 0v8M0 8.500h9M8.500 0v8" stroke="#666" /></S>
      <div className="ml-[16px] h-[2px] w-[6px] bg-[#666]" />
      <div className="ml-[4px] flex h-[12px] w-[100px] items-center">
        <div className="h-px w-[48px] bg-[#8a8a8a]" /><div className="h-[11px] w-[4px] bg-[#666]" /><div className="h-px flex-1 bg-[#8a8a8a]" />
      </div>
      <S w={8} h={8} className="ml-[3px]"><path d="M3 0h2v8H3zM0 3h8v2H0z" fill="#666" /></S>
      <T w={27} className="ml-[11px]">100%</T>
    </div>
  );
}

/* ---------- Taskbar ---------- */

function OfficeIcon({ color, letter, detail }) {
  return (
    <S w={17} h={16} crisp={false}>
      <path d="M9 2h7.500v12H9z" fill="white" stroke={color} />
      {detail}
      <path d="M0 1.500L10 0v16L0 14.500z" fill={color} />
      <text x="5" y="11.500" fontSize="10" fontWeight="700" fill="white" textAnchor="middle">{letter}</text>
    </S>
  );
}
const detailLines = (c) => <path d="M11 4.500h4M11 6.500h4M11 8.500h4M11 10.500h4" stroke={c} />;

const apps = [
  { open: true, icon: <S crisp={false}><circle cx="8" cy="8.500" r="7.500" fill="#f5641f" /><path d="M8 1c4 0 7.500 3 7.500 7.500 0 3-2 5-3.500 6 2-4 1-8-4-9z" fill="#ffcb2e" /><circle cx="7.500" cy="7.500" r="3.600" fill="#2b4fb5" /><path d="M2 4c2 1 5 3 4 6 2 2 4 1 5 0-1 4-7 4-8.500 0z" fill="#ee3b2d" /></S> },
  { open: true, icon: <S crisp={false}><path d="M0 1h6l1 2h9v11H0z" fill="#f7d774" /><path d="M0 5h16v9H0z" fill="#fde9a5" /><path d="M3 8h10v7h-3v-4H6v4H3z" fill="#35a7dd" /></S> },
  { open: true, icon: <OfficeIcon color="#0b72c6" letter="O" detail={<path d="M10 5l3 3 4-4" stroke="#0b72c6" strokeWidth="1.300" />} /> },
  { open: true, icon: <S crisp={false}><path d="M0 0h16v16H0z" fill="#0a84ff" /><path d="M8 3.500c3 0 5 2 5 4.300s-2 4.300-5 4.300l-3 1v-2c-1-.8-2-2-2-3.300 0-2.300 2-4.300 5-4.300z" fill="white" /><path d="M5 9l2.500-2.200L9 8l2-1" stroke="#0a84ff" /></S> },
  { icon: <S crisp={false}><circle cx="8" cy="8" r="7.800" fill="#2fa5dc" /><path d="M3 8l9.500-4L11 12 8 10l-1.500 1.500-.5-2.300L10 6 5 9z" fill="white" /></S> },
  { icon: <S crisp={false}><path d="M2 2h12v13l-3-2H2z" fill="#7289da" /><path d="M4 10c0-3 1-4.500 2-4.500h4c1 0 2 1.500 2 4.500-1 1-2 1-2.500 0h-3C6 11 5 11 4 10z" fill="white" /><path d="M6 8h1.300M9 8h1.300" stroke="#7289da" strokeWidth="1.300" /></S> },
  { icon: <S crisp={false}><circle cx="8" cy="8" r="7.800" fill="#1ed760" /><path d="M3.500 5.800c3-1 6.500-.6 9 .7M4 8.300c3-.8 5.500-.4 7.600.7M4.500 10.700c2.300-.6 4.500-.3 6.200.6" stroke="#0b2213" strokeWidth="1.400" strokeLinecap="round" /></S> },
  { icon: <S crisp={false}><path d="M2 0h8l4 4v12H2z" fill="#f5f5f5" /><path d="M10 0v4h4z" fill="#777" /></S> },
  { open: true, icon: <OfficeIcon color="#2b579a" letter="W" detail={detailLines("#2b579a")} /> },
  { icon: <OfficeIcon color="#d24726" letter="P" detail={<g><path d="M11 5.500h4v3h-4M11 10.500h4" stroke="#d24726" /></g>} /> },
  { open: true, active: true, icon: <OfficeIcon color="#217346" letter="X" detail={<g>{detailLines("#217346")}<path d="M13 3v10" stroke="white" /></g>} /> },
  { icon: <S crisp={false}><path d="M2 4l6-3 6 3v8l-6 3.500L2 12z" fill="#9db9d8" /><path d="M2 4l6 2.500L14 4 8 1z" fill="#e3edf7" /><path d="M8 6.500V15.500L14 12V4z" fill="#7394bd" /></S> },
  { icon: <S crisp={false}><path d="M0 0h16v16H0z" fill="#b50a0a" /><path d="M3 13L5.500 3.500H12M4.500 7.500H9M8 8h5l-5.500 5.500h5" stroke="white" strokeWidth="1.700" /></S> },
  { icon: <S crisp={false}><path d="M12 1v14M12 1.500L1.500 10.500M12 14.500L1.500 5.500" stroke="#1b7fc9" strokeWidth="2.400" /><path d="M12 0l4 2v12l-4 2z" fill="#2596e0" /></S> },
];

function Taskbar() {
  return (
    <div className="flex h-[30px] items-center bg-black text-[12px] text-white">
      <Slot className="w-[36px]"><S><path d="M0 2l7-1v7H0zM8 1l8-1v8H8zM0 9h7v6l-7-1zM8 9h8v7l-8-1z" fill="white" /></S></Slot>
      <Slot className="w-[37px]"><S crisp={false}><circle cx="10" cy="6" r="5" stroke="white" strokeWidth="1.300" /><path d="M6.500 9.500L.8 15.500" stroke="white" strokeWidth="1.300" /></S></Slot>
      <Slot className="w-[36px]"><S w={20} h={14}><path d="M4.500.5h11v12h-11zM2.500 1.500h-2v10h2M17.500 1.500h2v10h-2" stroke="white" /></S></Slot>
      <div className="ml-[1px] flex h-full">
        {apps.map((a, i) => (
          <div key={i} className={`relative flex h-full w-[37px] items-center justify-center ${a.active ? "bg-[#333]" : ""}`}>
            {a.icon}
            {a.open && <div className={`absolute bottom-0 h-[2px] bg-[#76b9ed] ${a.active ? "w-[37px]" : "w-[28px]"}`} />}
          </div>
        ))}
      </div>
      <S w={12} h={7} crisp={false} className="ml-[446px]"><path d="M1 6.500L6 1.500l5 5" stroke="white" strokeWidth="1.300" /></S>
      <S w={14} h={9} crisp={false} className="ml-[11px]"><path d="M3 9a3 3 0 01-.5-5C4 0 8 0 9 3c4-1 5 5 2 6z" fill="white" stroke="#2ba3d4" strokeWidth=".9" /></S>
      <S w={16} h={11} crisp={false} className="ml-[9px]"><path d="M1 7c-1-3 1-4 2-4 2-4 7-4 8 0-4-1-5 1-6 3-2 0-3 1-3 2z" fill="white" /><path d="M6 11c-3 0-3-4 0-4 1-4 6-4 6-1 4-1 5 5 1 5z" fill="white" /></S>
      <S w={16} h={14} className="ml-[8px]"><path d="M5 2.500h10.500v7H4.500V7M7 13.500h7M10.500 10v3M.5.5h4v4h-4zM2.500 5v7" stroke="white" /></S>
      <S w={16} h={13} crisp={false} className="ml-[8px]"><path d="M.5 4.500h2.500L7 1v11L3 8.500H.5zM9 4.500c1 1 1 3 0 4M11 3c2 2 2 5 0 7M13 1c3 3 3 8 0 11" stroke="white" strokeWidth="1.100" /></S>
      <T w={28} className="ml-[9px]">20:46</T>
      <S w={16} h={15} className="ml-[18px]"><path d="M0 0h16v12h-5l-3 3-2-3H0z" fill="white" /><path d="M3 3.500h10M3 6.500h10M3 9.500h7" stroke="black" /></S>
      <div className="ml-[21px] h-full w-px bg-[#555]" />
    </div>
  );
}

export default function App() {
  return (
    <div className="h-[1024px] w-[1280px] overflow-hidden bg-[#e6e6e6] font-['Noto_Sans',sans-serif]">
      <div className="relative h-[65px] bg-[#217346]">
        <Circuit />
        <TitleBar />
        <TabRow />
      </div>
      <Ribbon />
      <FormulaBar />
      <Sheet />
      <SheetTabs />
      <StatusBar />
      <Taskbar />
    </div>
  );
}
